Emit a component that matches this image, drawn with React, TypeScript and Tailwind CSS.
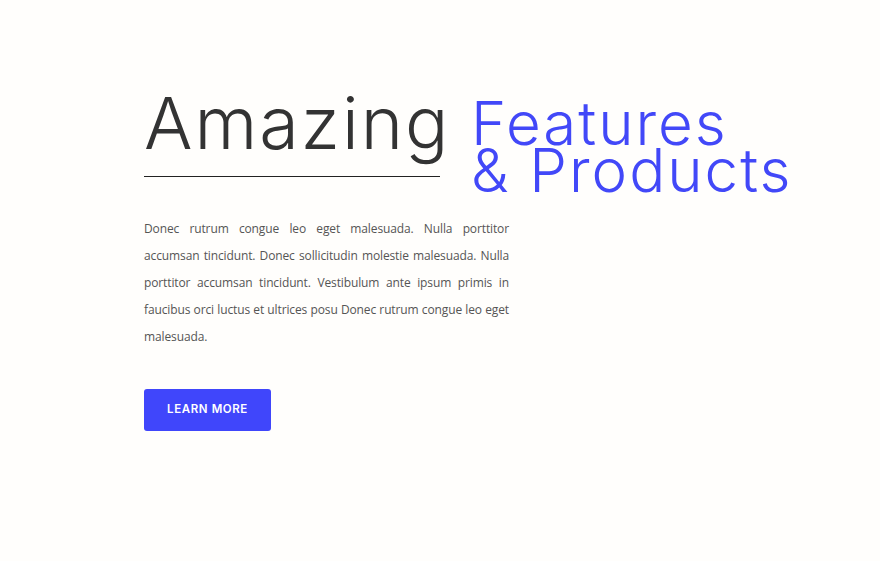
import React from 'react';

const lines = [
    'Donec rutrum congue leo eget malesuada. Nulla porttitor',
    'accumsan tincidunt. Donec sollicitudin molestie malesuada. Nulla',
    'porttitor accumsan tincidunt. Vestibulum ante ipsum primis in',
    'faucibus orci luctus et ultrices posu Donec rutrum congue leo eget',
    'malesuada.',
];

const App: React.FC = () => {
    return (
        <div className="min-h-[561px] w-full bg-[#fffefc]">
            <div className="pl-[144px] pt-[87px]">
                <div className="flex items-start">
                    <div className="w-[296px]">
                        <h1 className="font-['Inter',sans-serif] text-[72px] font-light leading-[72px] tracking-[2px] text-[#333333] whitespace-nowrap">
                            Amazing
                        </h1>
                        <div className="mt-[17px] h-px w-[296px] bg-[#222222]" />
                    </div>
                    <h2 className="ml-[31px] mt-[13px] font-['Inter',sans-serif] text-[60px] font-light leading-[47px] tracking-[2px] text-[#4248f8] whitespace-nowrap">
                        Features
                        <br />
                        &amp; Products
                    </h2>
                </div>
                <p className="mt-[21px] w-[365px] font-['Open_Sans',sans-serif] text-[12px] tracking-[-0.12px] leading-[27px] text-[#555555]">
                    {lines.map((line, i) => (
                        <span
                            key={i}
                            className={
                                i < lines.length - 1
                                    ? 'block whitespace-nowrap text-justify [text-align-last:justify]'
                                    : 'block whitespace-nowrap'
                            }
                        >
                            {line}
                        </span>
                    ))}
                </p>
                <button className="mt-[39px] h-[42px] w-[127px] rounded-[3px] bg-[#4046fb] font-['Inter',sans-serif] text-[11.5px] font-semibold tracking-[0.6px] text-white">
                    LEARN MORE
                </button>
            </div>
        </div>
    );
};

export default App;
